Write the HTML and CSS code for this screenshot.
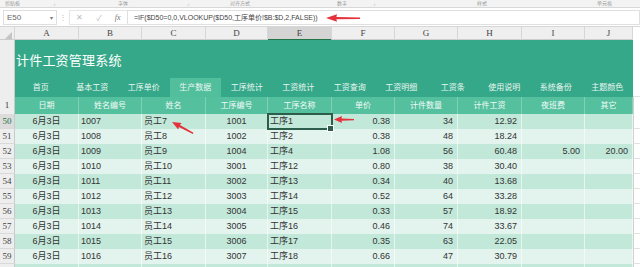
FILE: index.html
```html
<!DOCTYPE html>
<html lang="zh-CN">
<head>
    <meta charset="UTF-8">
    <title>计件工资管理系统</title>
    <link rel="stylesheet" href="styles.css">
</head>
<body>

<div class="ribbon">
    <span>剪贴板</span><span>⌟</span><span>字体</span><span>⌟</span><span>对齐方式</span><span>数字</span><span>⌟</span><span>样式</span><span>单元格</span>
</div>

<div class="fbar">
    <div class="namebox"><span>E50</span><span class="caret">▾</span></div>
    <div class="dots">⋮</div>
    <div class="fx-icons"><span>✕</span><span>✓</span><span class="fx">fx</span></div>
    <div class="formula">=IF($D50=0,0,VLOOKUP($D50,工序单价!$B:$D,2,FALSE))</div>
</div>

<div class="colhead">
    <div class="corner"><span class="tri"></span></div>
    <div>A</div><div>B</div><div>C</div><div>D</div><div class="on">E</div>
    <div>F</div><div>G</div><div>H</div><div>I</div><div>J</div>
    <div class="rest"></div>
</div>

<div class="band">
    <div class="rn"></div>
    <div class="banner">
        <div class="title">计件工资管理系统</div>
        <div class="nav">
            <span>首页</span><span>基本工资</span><span>工序单价</span><span class="active">生产数据</span>
            <span>工序统计</span><span>工资统计</span><span>工资查询</span><span>工资明细</span>
            <span>工资条</span><span>使用说明</span><span>系统备份</span><span>主题颜色</span>
        </div>
    </div>
    <div class="rest"></div>
</div>

<div class="row head">
    <div class="rn">1</div>
    <div>日期</div><div>姓名编号</div><div>姓名</div><div>工序编号</div><div>工序名称</div>
    <div>单价</div><div>计件数量</div><div>计件工资</div><div>夜班费</div><div>其它</div>
    <div class="rest"></div>
</div>

<div id="rows"></div>

<svg class="arrows" width="640" height="267" viewBox="0 0 640 267">
    <polygon points="326,18 337,14.3 336.4,16.9 360,17.6 360,18.9 336.4,19.3 337,21.8" />
    <g transform="translate(172,122) rotate(27.6)">
        <polygon points="0,0 9,-3.6 8.4,-1.1 24,-0.5 24,0.9 8.4,1.3 9,3.8" />
    </g>
    <g transform="translate(334,119.5)">
        <polygon points="0,0 8,-3.4 7.5,-1 20,-0.6 20,0.8 7.5,1.2 8,3.5" />
    </g>
</svg>

<script>
    const data = [
        [50, '1007', '员工7', '1001', '工序1', '0.38', '34', '12.92', '', ''],
        [51, '1008', '员工8', '1002', '工序2', '0.38', '48', '18.24', '', ''],
        [52, '1009', '员工9', '1004', '工序4', '1.08', '56', '60.48', '5.00', '20.00'],
        [53, '1010', '员工10', '3001', '工序12', '0.80', '38', '30.40', '', ''],
        [54, '1011', '员工11', '3002', '工序13', '0.34', '40', '13.68', '', ''],
        [55, '1012', '员工12', '3003', '工序14', '0.52', '64', '33.28', '', ''],
        [56, '1013', '员工13', '3004', '工序15', '0.33', '57', '18.92', '', ''],
        [57, '1014', '员工14', '3005', '工序16', '0.46', '74', '33.67', '', ''],
        [58, '1015', '员工15', '3006', '工序17', '0.35', '63', '22.05', '', ''],
        [59, '1016', '员工16', '3007', '工序18', '0.66', '47', '30.79', '', '']
    ];
    const align = ['c', 'l', 'l', 'c', 'l', 'r', 'r', 'r', 'r', 'r'];

    let html = '';
    data.forEach((d, i) => {
        const cells = ['6月3日'].concat(d.slice(1));
        html += `<div class="row data ${i % 2 ? 'odd' : 'even'}">`;
        html += `<div class="rn${d[0] === 50 ? ' cur' : ''}">${d[0]}</div>`;
        cells.forEach((c, j) => {
            const sel = d[0] === 50 && j === 4 ? ' sel' : '';
            html += `<div class="${align[j]}${sel}">${c}</div>`;
        });
        html += '<div class="rest"></div></div>';
    });
    html += '<div class="row data even"><div class="rn"></div>' + '<div></div>'.repeat(10) + '<div class="rest"></div></div>';
    document.getElementById('rows').innerHTML = html;
</script>

</body>
</html>
```

FILE: styles.css
```css
* {
    box-sizing: border-box;
}
body {
    margin: 0;
    width: 640px;
    height: 267px;
    overflow: hidden;
    position: relative;
    background: #fff;
    font-family: "Liberation Sans", "Noto Sans CJK SC", sans-serif;
    color: #333;
}

/* ribbon remnant at the very top */
.ribbon {
    height: 8px;
    overflow: hidden;
    background: #f3f3f3;
    border-bottom: 1px solid #d8d8d8;
    display: grid;
    grid-template-columns: 48px 65px 69px 43px 107px 36px 104px 120px 1fr;
    padding-left: 5px;
    font-size: 5px;
    line-height: 7px;
    color: #999;
}

/* formula bar */
.fbar {
    height: 19px;
    display: flex;
    align-items: center;
    background: #fff;
    border-bottom: 1px solid #d6d6d6;
}
.namebox {
    margin-left: 3px;
    width: 54px;
    height: 15px;
    border: 1px solid #dedede;
    display: flex;
    justify-content: space-between;
    align-items: center;
    padding: 0 3px;
    font-size: 8px;
    color: #666;
}
.caret {
    font-size: 6px;
    color: #777;
}
.dots {
    width: 12px;
    text-align: center;
    font-size: 8px;
    color: #bbb;
}
.fx-icons {
    width: 58px;
    height: 15px;
    display: flex;
    justify-content: space-around;
    align-items: center;
    font-size: 8px;
    color: #bcbcbc;
    border: 1px solid #e6e6e6;
    border-right: 0;
}
.fx-icons .fx {
    font-family: "Liberation Serif", serif;
    font-style: italic;
    color: #777;
}
.formula {
    flex: 1;
    height: 15px;
    border: 1px solid #e0e0e0;
    padding-left: 6px;
    font-size: 7px;
    line-height: 13px;
    color: #444;
    white-space: nowrap;
    overflow: hidden;
}

/* shared column grid */
.colhead,
.band,
.row {
    display: grid;
    grid-template-columns: 15px 64px 63px 64px 62px 64px 63px 63px 64px 63px 48px 1fr;
}

.colhead {
    height: 13px;
    background: #efefef;
    border-bottom: 1px solid #cdcdcd;
    font-family: "Liberation Serif", serif;
    font-size: 9px;
    color: #444;
}
.colhead div {
    text-align: center;
    line-height: 12px;
    border-right: 1px solid #d6d6d6;
}
.colhead .on {
    background: #d4d4d4;
    border-bottom: 2px solid #217346;
}
.colhead .rest {
    border-right: 0;
}
.corner {
    display: flex;
    justify-content: flex-end;
    align-items: flex-end;
    padding: 0 2px 2px 0;
}
.tri {
    width: 0;
    height: 0;
    border-left: 7px solid transparent;
    border-bottom: 7px solid #c4c4c4;
}

/* green title + nav band */
.band {
    height: 57px;
}
.rn {
    background: #eeeeee;
    border-right: 1px solid #c9c9c9;
    font-family: "Liberation Serif", serif;
    font-size: 8.5px;
    color: #444;
    text-align: center;
}
.banner {
    grid-column: 2 / 12;
    background: #35a889;
    display: flex;
    flex-direction: column;
}
.title {
    height: 38px;
    display: flex;
    align-items: center;
    padding: 1px 0 0 1px;
    font-size: 13px;
    color: #fff;
    letter-spacing: 0.2px;
}
.nav {
    height: 19px;
    display: grid;
    grid-template-columns: repeat(12, 1fr);
}
.nav span {
    font-size: 8px;
    line-height: 19px;
    text-align: center;
    color: #e9f7f2;
}
.nav .active {
    background: #52bf9c;
}

/* header row */
.head {
    height: 17px;
    background: #55c09e;
}
.head div {
    font-size: 8px;
    line-height: 17px;
    text-align: center;
    color: #f2fbf8;
    border-right: 1px solid rgba(255, 255, 255, 0.25);
}
.head .rn {
    color: #333;
    background: #eeeeee;
    border-right: 1px solid #c9c9c9;
    border-bottom: 1px solid #d6d6d6;
    font-size: 9px;
}
.rest {
    background: #fff;
    border-bottom: 1px solid #e2e2e2;
}
.head .rest {
    border-right: 0;
    border-left: 1px solid #d0d0d0;
}

/* data rows */
.data {
    height: 15px;
}
.data div {
    font-size: 9px;
    line-height: 15px;
    white-space: nowrap;
    border-right: 1px solid rgba(255, 255, 255, 0.55);
}
.even {
    background: #c2e8d9;
}
.odd {
    background: #e2f4ed;
}
.data .rn {
    background: #eeeeee;
    border-right: 1px solid #c9c9c9;
    border-bottom: 1px solid #d9d9d9;
    line-height: 14px;
}
.data .rn.cur {
    background: #dcdcdc;
    color: #217346;
}
.data .rest {
    border-right: 0;
    border-left: 1px solid #d0d0d0;
}
.data .c {
    text-align: center;
}
.data .l {
    padding-left: 2px;
}
.data .r {
    text-align: right;
    padding-right: 4px;
}
.data .sel {
    position: relative;
    outline: 2px solid #2c5e4b;
    outline-offset: -1px;
}
.data .sel::after {
    content: "";
    position: absolute;
    right: -3px;
    bottom: -3px;
    width: 5px;
    height: 5px;
    background: #2c5e4b;
    border: 1px solid #fff;
}

/* annotation arrows over the sheet */
.arrows {
    position: absolute;
    left: 0;
    top: 0;
    pointer-events: none;
}
.arrows polygon {
    fill: #e5323a;
}
```
